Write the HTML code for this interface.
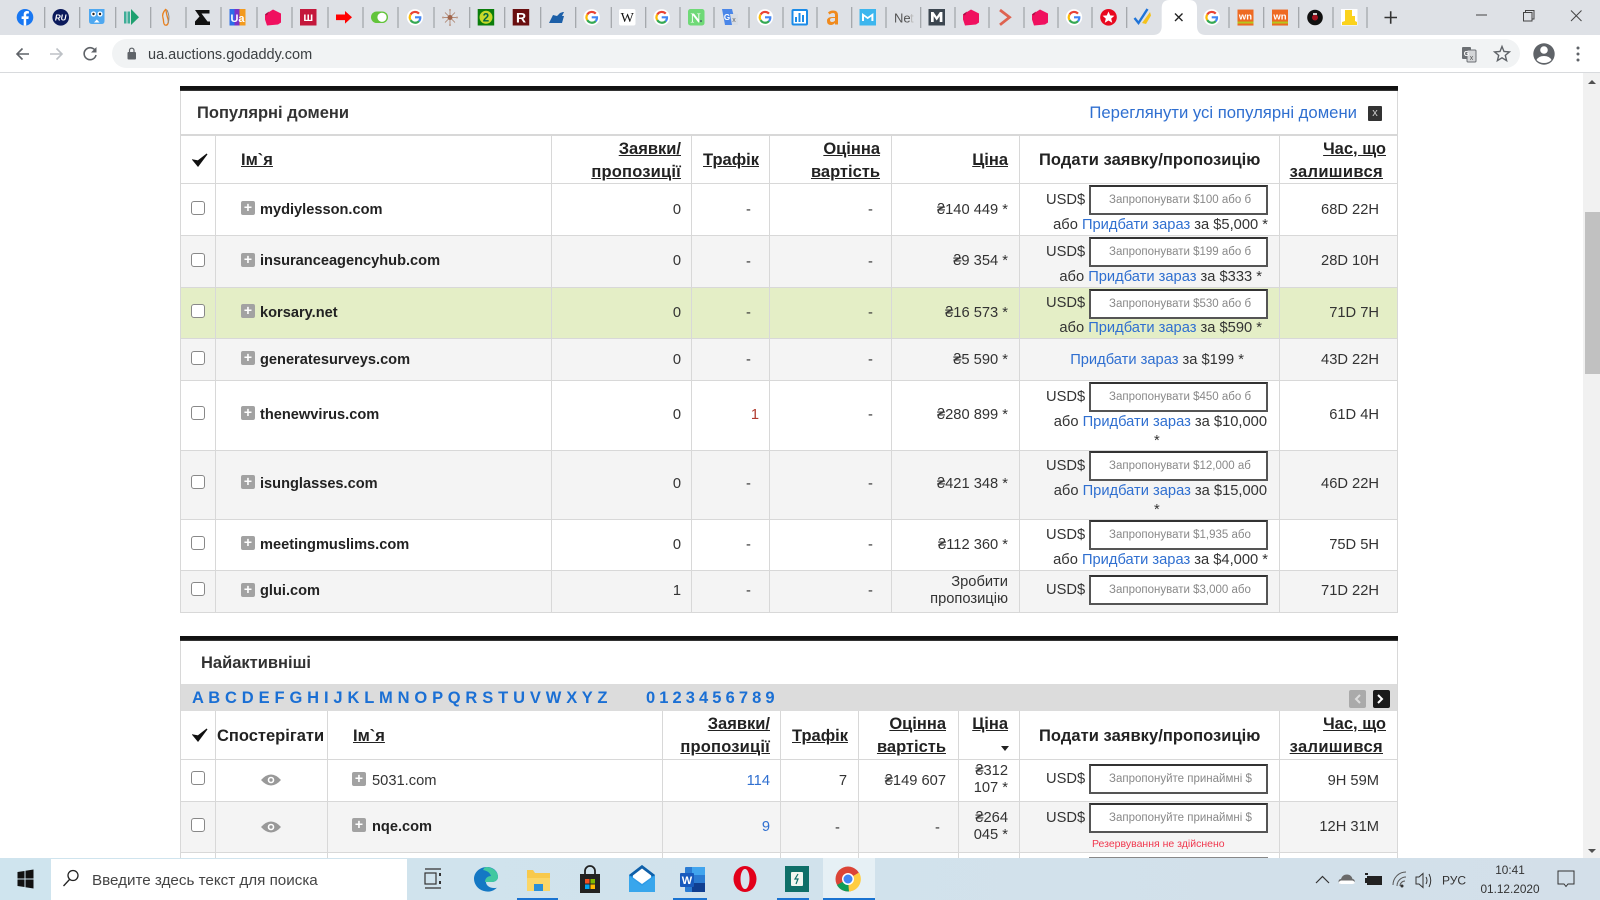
<!DOCTYPE html>
<html lang="uk"><head><meta charset="utf-8"><title>ua.auctions.godaddy.com</title>
<style>
html,body{margin:0;padding:0;width:1600px;height:900px;overflow:hidden;background:#fff}
body{font-family:"Liberation Sans",Arial,sans-serif;font-size:14.7px;color:#333;position:relative}
div,span.a{position:absolute}
.t{position:absolute;white-space:nowrap;line-height:20px;height:20px;margin-top:1px}
.r{text-align:right}
.b{font-weight:bold;color:#222;font-size:14.6px}
.h{font-weight:bold;color:#222;text-decoration:underline;font-size:16.5px}
.hn{font-weight:bold;color:#222;font-size:16.5px}
a{color:#2f6fd0;text-decoration:none}
.l{background:#d8d8d8}
.cb{position:absolute;width:12px;height:12px;border:1px solid #888;border-radius:3px;background:#fff;left:191px;margin-top:-1px}
.p{position:absolute;width:14px;height:14px;border-radius:2px;background:#a2a2a2;color:#fff;font:bold 14px/13px "Liberation Sans",sans-serif;text-align:center}
.i{position:absolute;left:1089px;width:175px;height:26px;border:2px solid #555;border-top-color:#333;background:#fff;color:#888;font-size:11.5px;line-height:27px;padding-left:0;text-indent:18px;overflow:hidden;white-space:nowrap}
.u{left:1046px}
.e{position:absolute;left:264px;width:16px;height:10px}
</style></head><body>

<!-- browser chrome -->
<div style="left:0;top:0;width:1600px;height:35px;background:#dee1e6"></div>
<div style="left:0;top:35px;width:1600px;height:37px;background:#fff"></div>
<div style="left:0;top:72px;width:1600px;height:1px;background:#d8dadd"></div>
<div style="left:112px;top:39px;width:1408px;height:29px;border-radius:15px;background:#f1f3f4"></div>

<svg style="position:absolute;left:0;top:0" width="1600" height="72" viewBox="0 0 1600 72" font-family="Liberation Sans,sans-serif">
<defs>
<symbol id="g" viewBox="0 0 16 16" overflow="visible">
<circle cx="8" cy="8" r="8.2" fill="#fff"/>
<g fill="none" stroke-width="2.2">
<path d="M12 4.3A5.3 5.3 0 0 0 3.6 5.2" stroke="#ea4335"/>
<path d="M3.6 5.2A5.3 5.3 0 0 0 3.6 10.8" stroke="#fbbc05"/>
<path d="M3.6 10.8A5.3 5.3 0 0 0 12 11.8" stroke="#34a853"/>
<path d="M12 11.8A5.3 5.3 0 0 0 13.3 8H8" stroke="#4285f4"/>
</g></symbol>
<symbol id="pk" viewBox="0 0 16 16" overflow="visible"><path d="M0 5L8 0l8 4v9l-3 2-11 1-2-6z" fill="#f0105f"/><path d="M0 5L1 4l3-2-2 4z" fill="#a80f45"/></symbol>
<symbol id="wn" viewBox="0 0 16 16" overflow="visible"><rect width="16" height="16" fill="#ee6a22"/><rect y="12" width="16" height="2" fill="#b5c71f"/><text x="8" y="10" font-size="9.5" font-weight="bold" fill="#fff" text-anchor="middle">wn</text></symbol>
</defs>
<path d="M44.7 7v21M79.7 7v21M115.7 7v21M150.7 7v21M186 7v21M221 7v21M257 7v21M292 7v21M328 7v21M363 7v21M398 7v21M434 7v21M469.7 7v21M504.7 7v21M540.7 7v21M575.7 7v21M611.3 7v21M645.7 7v21M680 7v21M714 7v21M749 7v21M783 7v21M817 7v21M851.7 7v21M886 7v21M920.7 7v21M955 7v21M989 7v21M1024 7v21M1058 7v21M1092 7v21M1126.7 7v21M1229 7v21M1263.7 7v21M1298.7 7v21M1333 7v21M1367 7v21" stroke="#9fa3a7" stroke-width="1.2"/>

<circle cx="25" cy="17.3" r="8.3" fill="#1877f2"/><path d="M26.2 25.5V19h2.2l.4-2.6h-2.6v-1.6c0-.8.3-1.3 1.4-1.3h1.3v-2.3c-.6-.1-1.2-.2-1.9-.2-2 0-3.3 1.2-3.3 3.4v2H21.600V19h2.100v6.500z" fill="#fff"/>
<circle cx="60.700" cy="17.300" r="8.300" fill="#0b1a5c"/><text x="60.700" y="20.300" font-size="8" font-weight="bold" font-style="italic" fill="#fff" text-anchor="middle">RU</text>
<path d="M89 9h15.500v12q0 3-3 3h-9.500q-3 0-3-3z" fill="#4fa8f0"/><circle cx="93.500" cy="14" r="2.600" fill="#fff"/><circle cx="100" cy="14" r="2.600" fill="#fff"/><circle cx="93.500" cy="14" r="1.200" fill="#222"/><circle cx="100" cy="14" r="1.200" fill="#222"/><path d="M94 22.500l2.800-3 2.800 3z" fill="#fff"/>
<path d="M124 11.500h2.500v12h-2.500zM127.500 11.500h2.500v12h-2.500z" fill="#3fae98"/><path d="M131 9l8 8.300-8 7.700z" fill="#1fa070"/>
<path d="M166 9c-3 3-4 6-3 9s0 6 2 7c3 1 4-3 3-6s-2-7-2-10" fill="none" stroke="#e8811f" stroke-width="1.300"/><path d="M167 10c2 4 3 8 1 13" fill="none" stroke="#8a8a8a" stroke-width="1"/>
<path d="M195 10h14.500v3.500h-8l6 8h2.500v3.500h-15v-3.500l4.500-5z" fill="#111"/>
<rect x="229.500" y="9" width="16" height="16.500" fill="#f39a1e"/><rect x="229.500" y="9" width="10" height="16.500" fill="#7a32c9"/><rect x="229.500" y="9" width="5" height="16.500" fill="#2e6ee8"/><text x="237.500" y="22" font-size="11" font-weight="bold" fill="#fff" text-anchor="middle">Ua</text>
<use href="#pk" x="265" y="9.500" width="16" height="16"/>
<rect x="300" y="9" width="16.500" height="16.500" fill="#c4183c"/><text x="308.200" y="21" font-size="12" font-weight="bold" fill="#fff" text-anchor="middle">ш</text>
<path d="M336 14.500h9v-3.500l7 6.300-7 6.300v-3.500h-9z" fill="#f00"/>
<rect x="371" y="11.500" width="17" height="11.500" rx="5.700" fill="#62c43a"/><circle cx="382" cy="17.300" r="4.600" fill="#fff"/>

<use href="#g" x="407" y="9.300" width="16" height="16"/>
<g stroke="#a5735a" stroke-width=".7"><path d="M450 11v13M443 17.500h14M445 12.500l10 10M455 12.500l-10 10"/></g><circle cx="450" cy="17.500" r="2.500" fill="#a0644a"/><circle cx="450" cy="10" r="1" fill="#b98"/><circle cx="450" cy="25" r="1" fill="#b98"/><circle cx="443" cy="17.500" r="1" fill="#b98"/><circle cx="457" cy="17.500" r="1" fill="#b98"/>
<rect x="477.700" y="9" width="16.500" height="16.500" fill="#0b7d0b"/><circle cx="486" cy="17.300" r="6.500" fill="#c7d92a"/><text x="486" y="21.500" font-size="11.500" font-weight="bold" fill="#064" text-anchor="middle">2</text>
<rect x="512.700" y="9" width="16.500" height="16.500" fill="#6a0f10"/><text x="521" y="22.500" font-size="14" font-weight="bold" fill="#fff" text-anchor="middle">R</text>
<path d="M549 23l4-8 4 1 3-3 3-1 1 0-2 4 2 0-2 7z" fill="#1c5fa8"/>
<use href="#g" x="583.700" y="9.300" width="16" height="16"/>
<rect x="619" y="9" width="16.500" height="16.500" rx="2" fill="#fff"/><text x="627.200" y="22" font-family="Liberation Serif,serif" font-size="14" fill="#111" text-anchor="middle">W</text>
<use href="#g" x="653.700" y="9.300" width="16" height="16"/>
<rect x="688" y="9" width="16.500" height="16.500" rx="2.500" fill="#6fd977"/><text x="695.500" y="22.500" font-family="Liberation Serif,serif" font-size="14" font-weight="bold" fill="#fff" text-anchor="middle">N</text><circle cx="701" cy="21" r=".8" fill="#225"/>
<path d="M722 9h10l4 16h-11z" fill="#4a86e8"/><path d="M730 14h8v11h-6z" fill="#d8dde4"/><text x="727" y="20" font-size="8" font-weight="bold" fill="#fff" text-anchor="middle">G</text><text x="734" y="22" font-size="7" fill="#666" text-anchor="middle">x</text>
<use href="#g" x="757" y="9.300" width="16" height="16"/>
<rect x="791.500" y="9" width="16.500" height="16.500" rx="2" fill="#1a8be8"/><rect x="793.500" y="11" width="12.500" height="12.500" fill="#fff"/><path d="M795 17h2v5h-2zM798.500 13h2v9h-2zM802 15h2v7h-2z" fill="#1a8be8"/>
<path d="M828 12.500q2-2 5-2 5 0 5 4.500v9.500h-3v-1.500q-2 2-4 2-4 0-4-4 0-4 5-4h3v-2q0-2-2-2t-3.500 1.500zM835 18h-2.500q-2.500 0-2.500 2t2 2 3-1.500z" fill="#f08a1d"/>
<rect x="859.500" y="9" width="16.500" height="16.500" fill="#3db6ee"/><path d="M862 21v-8l5.700 4 5.700-4v8h-2v-4.500l-3.700 2.600-3.700-2.600v4.500z" fill="#fff"/>
<text x="894" y="22.500" font-size="13" fill="#555">Ne</text><text x="910" y="22.500" font-size="13" fill="#bbb">t</text>
<rect x="928.500" y="9" width="16.500" height="16.500" fill="#3c4650"/><path d="M931 22V12h2.500l3.200 4.600 3.200-4.600h2.500v10h-2.700v-5.700l-3 4.200-3-4.200v5.700z" fill="#fff"/>
<use href="#pk" x="963" y="9.500" width="16" height="16"/>
<path d="M1000 10l9.500 7.300-9.500 7.500" fill="none" stroke="#de6350" stroke-width="2.800"/>
<use href="#pk" x="1032" y="9.500" width="16" height="16"/>
<use href="#g" x="1066" y="9.300" width="16" height="16"/>
<circle cx="1108.500" cy="17.300" r="8.300" fill="#e8091f"/><path d="M1108.500 11.500l1.700 3.900 4.200.4-3.200 2.800 1 4.100-3.700-2.200-3.700 2.200 1-4.100-3.200-2.800 4.200-.4z" fill="#fff"/>
<path d="M1134.500 18l4 5 9-14" fill="none" stroke="#1f74d8" stroke-width="2.400"/><path d="M1142 23l8-11 1 3.500-5 8.500z" fill="#f5c21b"/>

<path d="M1153 35q8 0 8.700-8V8q0-8 8-8h19.300q8 0 8 8v19q.700 8 8.700 8z" fill="#fff"/>
<path d="M1175 13.500l7.500 7.500M1182.500 13.500l-7.500 7.500" stroke="#222" stroke-width="1.400"/>
<use href="#g" x="1203.700" y="9.300" width="16" height="16"/>
<use href="#wn" x="1237.500" y="9.300" width="16" height="16.500"/>
<use href="#wn" x="1272" y="9.300" width="16" height="16.500"/>
<circle cx="1315" cy="17.500" r="7.800" fill="#111"/><circle cx="1315" cy="17.500" r="3" fill="#a3121e"/><rect x="1313" y="13" width="4" height="2" fill="#ccc"/>
<rect x="1341" y="9" width="16.500" height="16.500" fill="#fff"/><path d="M1342 25v-3l3-1v-11h7v6h3v5l2 1v3z" fill="#fbd21c"/>
<path d="M1384.500 17.500h12.500M1390.700 11.300v12.500" stroke="#333" stroke-width="1.600"/>
<path d="M1476 15h11" stroke="#444" stroke-width="1"/>
<path d="M1523.500 12.500h8.500v8.500h-8.500zM1525.500 12.500v-2h8.500v8.500h-2" fill="none" stroke="#444" stroke-width="1"/>
<path d="M1571 10.500l10.500 10.500M1581.500 10.500l-10.500 10.500" stroke="#444" stroke-width="1"/>

<!-- toolbar -->
<path d="M29 54H17M22.500 48.500L17 54l5.500 5.500" fill="none" stroke="#5f6368" stroke-width="1.600"/>
<path d="M50 54h12M56.500 48.500L62 54l-5.500 5.500" fill="none" stroke="#bdc1c6" stroke-width="1.600"/>
<path d="M95.500 51a6 6 0 1 0 .5 4" fill="none" stroke="#5f6368" stroke-width="1.600"/><path d="M96.500 47v5.500H91z" fill="#5f6368"/>
<rect x="127.500" y="52" width="8.500" height="7.500" rx="1" fill="#5f6368"/><path d="M129.500 52v-2a2.300 2.300 0 0 1 4.500 0v2" fill="none" stroke="#5f6368" stroke-width="1.200"/>
<text x="148" y="59" font-size="14.500" fill="#3c4043">ua.auctions.godaddy.com</text>
<rect x="1462" y="47" width="9" height="12" rx="1" fill="#6b6f73"/><rect x="1467" y="50" width="9" height="12" rx="1" fill="#d4d6d8" stroke="#6b6f73"/><text x="1466.500" y="56" font-size="7" font-weight="bold" fill="#fff" text-anchor="middle">G</text><text x="1471.500" y="60" font-size="7" fill="#555" text-anchor="middle">x</text>
<path d="M1502 46.500l2 5 5.400.4-4.100 3.500 1.300 5.200-4.600-2.800-4.600 2.800 1.300-5.200-4.100-3.500 5.400-.4z" fill="none" stroke="#5f6368" stroke-width="1.400"/>
<circle cx="1544" cy="54" r="10.700" fill="#5f6368"/><circle cx="1544" cy="50" r="3.800" fill="#fff"/><path d="M1536.500 60q2-4 7.500-4t7.500 4q-3 3-7.500 3t-7.500-3z" fill="#fff"/>
<circle cx="1578" cy="48" r="1.500" fill="#5f6368"/><circle cx="1578" cy="54" r="1.500" fill="#5f6368"/><circle cx="1578" cy="60" r="1.500" fill="#5f6368"/>
</svg>

<!-- scrollbar -->
<div style="left:1583px;top:73px;width:17px;height:785px;background:#f1f1f1"></div>
<div style="left:1585px;top:212px;width:15px;height:162px;background:#c1c1c1"></div>
<svg style="position:absolute;left:1586px;top:78px" width="12" height="8"><path d="M6 2l4 4H2z" fill="#505050"/></svg>
<svg style="position:absolute;left:1586px;top:847px" width="12" height="8"><path d="M6 6L2 2h8z" fill="#505050"/></svg>

<!-- PANEL 1 -->
<div style="left:180px;top:86px;width:1218px;height:5px;background:linear-gradient(#111,#111 70%,#444)"></div>
<div class="l" style="left:180px;top:91px;width:1px;height:521px"></div>
<div class="l" style="left:1397px;top:91px;width:1px;height:521px"></div>
<div style="left:181px;top:183px;width:1216px;height:0"></div>
<div style="left:181px;top:235px;width:1216px;height:52px;background:#f4f4f4"></div>
<div style="left:181px;top:287px;width:1216px;height:51px;background:#e4eec6"></div>
<div style="left:181px;top:338px;width:1216px;height:42px;background:#f4f4f4"></div>
<div style="left:181px;top:450px;width:1216px;height:70px;background:#f4f4f4"></div>
<div style="left:181px;top:570px;width:1216px;height:42px;background:#f4f4f4"></div>

<div class="l" style="left:180px;top:134px;width:1218px;height:2px"></div>
<div class="l" style="left:180px;top:183px;width:1218px;height:1px"></div>
<div class="l" style="left:180px;top:235px;width:1218px;height:1px"></div>
<div class="l" style="left:180px;top:287px;width:1218px;height:1px"></div>
<div class="l" style="left:180px;top:338px;width:1218px;height:1px"></div>
<div class="l" style="left:180px;top:380px;width:1218px;height:1px"></div>
<div class="l" style="left:180px;top:450px;width:1218px;height:1px"></div>
<div class="l" style="left:180px;top:519px;width:1218px;height:1px"></div>
<div class="l" style="left:180px;top:570px;width:1218px;height:1px"></div>
<div class="l" style="left:180px;top:612px;width:1218px;height:1px"></div>
<div class="l" style="left:215px;top:135px;width:1px;height:477px"></div>
<div class="l" style="left:551px;top:135px;width:1px;height:477px"></div>
<div class="l" style="left:691px;top:135px;width:1px;height:477px"></div>
<div class="l" style="left:769px;top:135px;width:1px;height:477px"></div>
<div class="l" style="left:891px;top:135px;width:1px;height:477px"></div>
<div class="l" style="left:1019px;top:135px;width:1px;height:477px"></div>
<div class="l" style="left:1279px;top:135px;width:1px;height:477px"></div>

<span class="t" style="left:197px;top:103px;margin-top:0;font-size:16.5px;font-weight:bold;color:#333">Популярні домени</span>
<span class="t r" style="right:243px;top:103px;margin-top:0;font-size:16.7px"><a href="#">Переглянути усі популярні домени</a></span>
<div style="left:1368px;top:106px;width:14px;height:15px;background:#333;border-radius:1px;color:#ccc;font:11px/15px 'Liberation Sans',sans-serif;text-align:center">x</div>

<svg style="position:absolute;left:192px;top:153px" width="16" height="14"><path d="M1 7l5 6L15 1l-9 7z" fill="#111" stroke="#111" stroke-width="1.200"/></svg>
<span class="t h" style="left:241px;top:149px">Ім`я</span>
<span class="t r h" style="right:919px;top:138px">Заявки/</span>
<span class="t r h" style="right:919px;top:161px;letter-spacing:.2px">пропозиції</span>
<span class="t h" style="left:703px;top:149px">Трафік</span>
<span class="t r h" style="right:720px;top:138px">Оцінна</span>
<span class="t r h" style="right:720px;top:161px">вартість</span>
<span class="t r h" style="right:592px;top:149px">Ціна</span>
<span class="t hn" style="left:1039px;top:149px;letter-spacing:.05px">Подати заявку/пропозицію</span>
<span class="t r h" style="right:214px;top:138px">Час, що</span>
<span class="t r h" style="right:217px;top:161px;letter-spacing:.35px">залишився</span>

<!-- rows: panel 1 -->
<span class="cb" style="top:202px"></span><span class="p" style="left:241px;top:201px">+</span><span class="t b" style="left:260px;top:199px">mydiylesson.com</span>
<span class="t r" style="right:919px;top:199px">0</span><span class="t" style="left:746px;top:199px">-</span><span class="t" style="left:868px;top:199px">-</span><span class="t r" style="right:592px;top:199px">₴140 449 *</span>
<span class="t u" style="top:189px">USD$</span><div class="i" style="top:185px">Запропонувати $100 або б</div>
<span class="t r" style="right:332px;top:214px">або <a href="#">Придбати зараз</a> за $5,000 *</span>
<span class="t r" style="right:221px;top:199px">68D 22H</span>

<span class="cb" style="top:254px"></span><span class="p" style="left:241px;top:253px">+</span><span class="t b" style="left:260px;top:250px">insuranceagencyhub.com</span>
<span class="t r" style="right:919px;top:250px">0</span><span class="t" style="left:746px;top:251px">-</span><span class="t" style="left:868px;top:251px">-</span><span class="t r" style="right:592px;top:250px">₴9 354 *</span>
<span class="t u" style="top:241px">USD$</span><div class="i" style="top:237px">Запропонувати $199 або б</div>
<span class="t r" style="right:338px;top:266px">або <a href="#">Придбати зараз</a> за $333 *</span>
<span class="t r" style="right:221px;top:250px">28D 10H</span>

<span class="cb" style="top:305px"></span><span class="p" style="left:241px;top:304px">+</span><span class="t b" style="left:260px;top:302px">korsary.net</span>
<span class="t r" style="right:919px;top:302px">0</span><span class="t" style="left:746px;top:302px">-</span><span class="t" style="left:868px;top:302px">-</span><span class="t r" style="right:592px;top:302px">₴16 573 *</span>
<span class="t u" style="top:292px">USD$</span><div class="i" style="top:289px">Запропонувати $530 або б</div>
<span class="t r" style="right:338px;top:317px">або <a href="#">Придбати зараз</a> за $590 *</span>
<span class="t r" style="right:221px;top:302px">71D 7H</span>

<span class="cb" style="top:352px"></span><span class="p" style="left:241px;top:351px">+</span><span class="t b" style="left:260px;top:349px">generatesurveys.com</span>
<span class="t r" style="right:919px;top:349px">0</span><span class="t" style="left:746px;top:349px">-</span><span class="t" style="left:868px;top:349px">-</span><span class="t r" style="right:592px;top:349px">₴5 590 *</span>
<span class="t r" style="right:356px;top:349px"><a href="#">Придбати зараз</a> за $199 *</span>
<span class="t r" style="right:221px;top:349px">43D 22H</span>

<span class="cb" style="top:407px"></span><span class="p" style="left:241px;top:406px">+</span><span class="t b" style="left:260px;top:404px">thenewvirus.com</span>
<span class="t r" style="right:919px;top:404px">0</span><span class="t r" style="right:841px;top:404px"><a href="#" style="color:#b03a2e">1</a></span><span class="t" style="left:868px;top:404px">-</span><span class="t r" style="right:592px;top:404px">₴280 899 *</span>
<span class="t u" style="top:386px">USD$</span><div class="i" style="top:382px">Запропонувати $450 або б</div>
<span class="t r" style="right:333px;top:411px">або <a href="#">Придбати зараз</a> за $10,000</span>
<span class="t" style="left:1154px;top:430px">*</span>
<span class="t r" style="right:221px;top:404px">61D 4H</span>

<span class="cb" style="top:476px"></span><span class="p" style="left:241px;top:475px">+</span><span class="t b" style="left:260px;top:473px">isunglasses.com</span>
<span class="t r" style="right:919px;top:473px">0</span><span class="t" style="left:746px;top:473px">-</span><span class="t" style="left:868px;top:473px">-</span><span class="t r" style="right:592px;top:473px">₴421 348 *</span>
<span class="t u" style="top:455px">USD$</span><div class="i" style="top:451px">Запропонувати $12,000 аб</div>
<span class="t r" style="right:333px;top:480px">або <a href="#">Придбати зараз</a> за $15,000</span>
<span class="t" style="left:1154px;top:499px">*</span>
<span class="t r" style="right:221px;top:473px">46D 22H</span>

<span class="cb" style="top:537px"></span><span class="p" style="left:241px;top:536px">+</span><span class="t b" style="left:260px;top:534px">meetingmuslims.com</span>
<span class="t r" style="right:919px;top:534px">0</span><span class="t" style="left:746px;top:534px">-</span><span class="t" style="left:868px;top:534px">-</span><span class="t r" style="right:592px;top:534px">₴112 360 *</span>
<span class="t u" style="top:524px">USD$</span><div class="i" style="top:520px">Запропонувати $1,935 або</div>
<span class="t r" style="right:332px;top:549px">або <a href="#">Придбати зараз</a> за $4,000 *</span>
<span class="t r" style="right:221px;top:534px">75D 5H</span>

<span class="cb" style="top:583px"></span><span class="p" style="left:241px;top:583px">+</span><span class="t b" style="left:260px;top:580px">glui.com</span>
<span class="t r" style="right:919px;top:580px">1</span><span class="t" style="left:746px;top:580px">-</span><span class="t" style="left:868px;top:580px">-</span>
<span class="t r" style="right:592px;top:571px">Зробити</span><span class="t r" style="right:592px;top:588px">пропозицію</span>
<span class="t u" style="top:579px">USD$</span><div class="i" style="top:575px">Запропонувати $3,000 або</div>
<span class="t r" style="right:221px;top:580px">71D 22H</span>

<!-- PANEL 2 -->
<div style="left:180px;top:636px;width:1218px;height:5px;background:linear-gradient(#111,#111 70%,#444)"></div>
<div style="left:180px;top:684px;width:1218px;height:27px;background:#dcdcdc"></div>
<div style="left:181px;top:802px;width:1216px;height:51px;background:#f4f4f4"></div>
<div class="l" style="left:180px;top:641px;width:1px;height:217px"></div>
<div class="l" style="left:1397px;top:641px;width:1px;height:217px"></div>
<div class="l" style="left:180px;top:759px;width:1218px;height:1px"></div>
<div class="l" style="left:180px;top:801px;width:1218px;height:1px"></div>
<div class="l" style="left:180px;top:852px;width:1218px;height:1px"></div>
<div class="l" style="left:215px;top:711px;width:1px;height:147px"></div>
<div class="l" style="left:327px;top:711px;width:1px;height:147px"></div>
<div class="l" style="left:662px;top:711px;width:1px;height:147px"></div>
<div class="l" style="left:780px;top:711px;width:1px;height:147px"></div>
<div class="l" style="left:858px;top:711px;width:1px;height:147px"></div>
<div class="l" style="left:958px;top:711px;width:1px;height:147px"></div>
<div class="l" style="left:1019px;top:711px;width:1px;height:147px"></div>
<div class="l" style="left:1279px;top:711px;width:1px;height:147px"></div>

<span class="t" style="left:201px;top:653px;margin-top:0;font-size:16.5px;font-weight:bold;color:#333">Найактивніші</span>

<span class="t" style="left:192px;top:688px;margin-top:0;font-size:16.5px;font-weight:bold;color:#1a6fd4;word-spacing:.3px">A B C D E F G H I J K L M N O P Q R S T U V W X Y Z</span>
<span class="t" style="left:646px;top:688px;margin-top:0;font-size:16.5px;font-weight:bold;color:#1a6fd4;word-spacing:-.5px">0 1 2 3 4 5 6 7 8 9</span>

<div style="left:1349px;top:690px;width:17px;height:18px;background:#aaa;border-radius:2px"></div>
<div style="left:1373px;top:690px;width:17px;height:18px;background:#1a1a1a;border-radius:2px"></div>
<svg style="position:absolute;left:1349px;top:690px" width="41" height="18"><path d="M11 5l-4 4 4 4" fill="none" stroke="#ddd" stroke-width="2"/><path d="M29 5l4 4-4 4" fill="none" stroke="#fff" stroke-width="2"/></svg>

<svg style="position:absolute;left:192px;top:728px" width="16" height="14"><path d="M1 7l5 6L15 1l-9 7z" fill="#111" stroke="#111" stroke-width="1.200"/></svg>
<span class="t hn" style="left:217px;top:725px">Спостерігати</span>
<span class="t h" style="left:353px;top:725px">Ім`я</span>
<span class="t r h" style="right:830px;top:713px">Заявки/</span>
<span class="t r h" style="right:830px;top:736px;letter-spacing:.2px">пропозиції</span>
<span class="t h" style="left:792px;top:725px">Трафік</span>
<span class="t r h" style="right:654px;top:713px">Оцінна</span>
<span class="t r h" style="right:654px;top:736px">вартість</span>
<span class="t r h" style="right:592px;top:713px">Ціна</span>
<svg style="position:absolute;left:1001px;top:746px" width="9" height="6"><path d="M0 0h8L4 5z" fill="#222"/></svg>
<span class="t hn" style="left:1039px;top:725px;letter-spacing:.05px">Подати заявку/пропозицію</span>
<span class="t r h" style="right:214px;top:713px">Час, що</span>
<span class="t r h" style="right:217px;top:736px;letter-spacing:.35px">залишився</span>

<span class="cb" style="top:772px"></span>
<svg class="e" style="position:absolute;left:261px;top:773px;width:20px;height:14px" viewBox="0 0 20 14"><path d="M0 7q10-11 20 0q-10 11-20 0z" fill="#999"/><circle cx="10" cy="7" r="3.300" fill="#fff"/><circle cx="10" cy="7" r="1.700" fill="#999"/></svg>
<span class="p" style="left:352px;top:772px">+</span><span class="t" style="left:372px;top:770px">5031.com</span>
<span class="t r" style="right:830px;top:770px"><a href="#">114</a></span>
<span class="t r" style="right:753px;top:770px">7</span>
<span class="t r" style="right:654px;top:770px">₴149 607</span>
<span class="t r" style="right:592px;top:760px">₴312</span><span class="t r" style="right:592px;top:777px">107 *</span>
<span class="t u" style="top:768px">USD$</span><div class="i" style="top:764px">Запропонуйте принаймні $</div>
<span class="t r" style="right:221px;top:770px">9H 59M</span>

<span class="cb" style="top:819px"></span>
<svg class="e" style="position:absolute;left:261px;top:820px;width:20px;height:14px" viewBox="0 0 20 14"><path d="M0 7q10-11 20 0q-10 11-20 0z" fill="#999"/><circle cx="10" cy="7" r="3.300" fill="#fff"/><circle cx="10" cy="7" r="1.700" fill="#999"/></svg>
<span class="p" style="left:352px;top:818px">+</span><span class="t b" style="left:372px;top:816px">nqe.com</span>
<span class="t r" style="right:830px;top:816px"><a href="#">9</a></span>
<span class="t" style="left:835px;top:817px">-</span><span class="t" style="left:935px;top:817px">-</span>
<span class="t r" style="right:592px;top:807px">₴264</span><span class="t r" style="right:592px;top:824px">045 *</span>
<span class="t u" style="top:807px">USD$</span><div class="i" style="top:803px">Запропонуйте принаймні $</div>
<span class="t" style="left:1092px;top:833px;font-size:10.5px;color:#f0384e">Резервування не здійснено</span>
<span class="t r" style="right:221px;top:816px">12H 31M</span>
<div style="left:1089px;top:857px;width:179px;height:2px;background:#888"></div>

<!-- TASKBAR -->
<div style="left:0;top:858px;width:1600px;height:42px;background:linear-gradient(90deg,#cfe4ee,#d1e2ec 50%,#d3dfe9)"></div>
<div style="left:51px;top:859px;width:356px;height:41px;background:#fff"></div>
<div style="left:823px;top:858px;width:52px;height:42px;background:#e6f0f5"></div>
<span class="t" style="left:92px;top:870px;font-size:15.2px;color:#444">Введите здесь текст для поиска</span>
<svg style="position:absolute;left:0;top:858px" width="1600" height="42" viewBox="0 0 1600 42" font-family="Liberation Sans,sans-serif">
<path d="M17.500 14l7-1v7.500h-7zM25.500 12.800l8-1.300v9h-8zM17.500 21.500h7V29l-7-1zM25.500 21.500h8v9l-8-1.300z" fill="#111"/>
<circle cx="73" cy="17.500" r="5" fill="none" stroke="#222" stroke-width="1.300"/><path d="M69.500 21.500L63.500 28" stroke="#222" stroke-width="1.300"/>
<path d="M425 11h16M425 30h16" stroke="#333" stroke-width="1.200"/><rect x="425" y="15" width="11" height="11" fill="none" stroke="#333" stroke-width="1.200"/><path d="M439 15h2v3h-2zM439 23h2v3h-2z" fill="#333"/>
<path d="M474 21c0-7 6-12 13-12 6 0 11 4 11 10 0 3-3 5-6 5h-6c0 3 3 6 8 6 2 0 3-.4 3-.4-3 3-6 4-9 4-8 0-14-6-14-13z" fill="#1478c4"/><path d="M486 9c6 0 12 4 12 10 0 3-3 5-6 5h-7c0-4 3-6 6-6-1-3-3-5-8-6 1-2 2-3 3-3z" fill="#41c8a0"/>
<path d="M527 12h6l2 3h15v18h-23z" fill="#f8c94c"/><rect x="527" y="20" width="23" height="13" fill="#fbd667"/><rect x="534" y="26" width="9" height="7" fill="#2a8fd8"/>
<rect x="580" y="16" width="20" height="19" fill="#222"/><path d="M585 16v-3a5 5 0 0 1 10 0v3" fill="none" stroke="#222" stroke-width="1.800"/><rect x="585" y="21" width="4.500" height="4.500" fill="#f25022"/><rect x="590.500" y="21" width="4.500" height="4.500" fill="#7fba00"/><rect x="585" y="26.500" width="4.500" height="4.500" fill="#00a4ef"/><rect x="590.500" y="26.500" width="4.500" height="4.500" fill="#ffb900"/>
<path d="M629 17l13-10 13 10v17h-26z" fill="#2f9be6"/><path d="M633 15.500l9-6.500 9 6.500v4l-9 6.500-9-6.500z" fill="#fff"/><path d="M629 17l13-10 13 10-2.500 1.500-10.500-8-10.500 8z" fill="#0f5fa8"/><path d="M629 18l13 10 13-10v16h-26z" fill="#38a6ec"/>
<rect x="685" y="9" width="20" height="25" rx="1" fill="#2b7cd3"/><rect x="692" y="9" width="13" height="8" fill="#41a5ee"/><rect x="692" y="25" width="13" height="9" fill="#103f91"/><rect x="680" y="15" width="14" height="14" rx="1" fill="#185abd"/><text x="687" y="26" font-size="11" font-weight="bold" fill="#fff" text-anchor="middle">W</text>
<ellipse cx="745" cy="21" rx="11.500" ry="13" fill="#e2001a"/><ellipse cx="745" cy="21" rx="4.500" ry="10" fill="#d7e5ee"/>
<rect x="785" y="8" width="24" height="26" fill="#0f6f68"/><rect x="791" y="14" width="12" height="14" rx="1" fill="#f2f6f0"/><path d="M798 16l-3 5h3l-2 5" fill="none" stroke="#0f6f68" stroke-width="1.200"/>
<circle cx="848" cy="21" r="12.500" fill="#db4437"/><path d="M848 21L837 27a12.500 12.500 0 0 0 12 6.500z" fill="#0f9d58"/><path d="M848 21l11-6.500a12.500 12.500 0 0 1-10 19z" fill="#ffcd40"/><circle cx="848" cy="21" r="6" fill="#fff"/><circle cx="848" cy="21" r="4.500" fill="#4285f4"/>
<rect x="517" y="40" width="41" height="2" fill="#1a73d1"/><rect x="673" y="40" width="34" height="2" fill="#1a73d1"/><rect x="777" y="40" width="32" height="2" fill="#1a73d1"/><rect x="823" y="40" width="52" height="2" fill="#1a73d1"/>
<path d="M1316 25l6.500-6.500 6.500 6.500" fill="none" stroke="#333" stroke-width="1.200"/>
<path d="M1341 26c-3 0-3.500-5 0-5 1-3 3-4.500 6-4.500s5 2 5.500 4.500c3 0 3 5 0 5z" fill="#6a6a6a"/><path d="M1341 26c-3 0-3-2.500 0-3.500h11.500c3 1 3 3.500 0 3.500z" fill="#fff"/>
<rect x="1367" y="18" width="15" height="9" fill="#222"/><rect x="1365" y="20" width="2" height="5" fill="#222"/><rect x="1365" y="15" width="3" height="2" fill="#222"/>
<circle cx="1402" cy="28" r="1.500" fill="#333"/><path d="M1393 27a13 13 0 0 1 13-13M1397 28a9 9 0 0 1 9-9M1400 28a5 5 0 0 1 5-5" fill="none" stroke="#555" stroke-width="1"/>
<path d="M1416 19h3l4-3.500v14l-4-3.500h-3z" fill="none" stroke="#333" stroke-width="1"/><path d="M1426 19q2 3.500 0 7M1429 16q3.500 6.500 0 13" fill="none" stroke="#333" stroke-width="1"/>
<text x="1454" y="26.500" font-size="12" fill="#333" text-anchor="middle">РУС</text>
<text x="1510" y="16" font-size="11.800" fill="#333" text-anchor="middle">10:41</text>
<text x="1510" y="35" font-size="11.800" fill="#333" text-anchor="middle">01.12.2020</text>
<path d="M1558 13h16v13h-6l-2 2.500-2-2.500h-6z" fill="none" stroke="#333" stroke-width="1"/>
</svg>
</body></html>
